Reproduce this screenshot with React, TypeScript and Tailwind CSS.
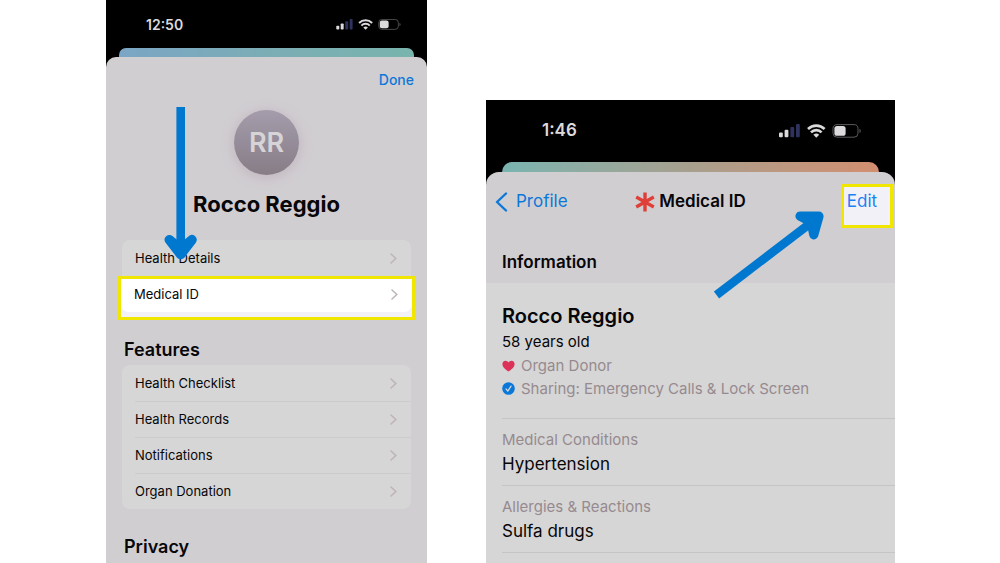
import type { ReactNode } from 'react';

const features = ['Health Checklist', 'Health Records', 'Notifications', 'Organ Donation'];

const records = [
  { label: 'Medical Conditions', value: 'Hypertension' },
  { label: 'Allergies & Reactions', value: 'Sulfa drugs' },
];

/** Signal, wifi and battery */
function StatusIcons({ className }: { className: string }) {
  return (
    <svg viewBox="0 0 82 14" className={className} aria-hidden="true">
      <g fill="#dcdadc">
        <rect x="0" y="8.5" width="3.8" height="4.8" rx="1" />
        <rect x="5.6" y="5.8" width="3.8" height="7.5" rx="1" />
      </g>
      <g fill="#2f325c">
        <rect x="11.4" y="3" width="3.8" height="10.3" rx="1" />
        <rect x="17" y="0" width="3.8" height="13.3" rx="1" />
      </g>
      <g fill="none" stroke="#dcdadc" strokeWidth="2.6">
        <path d="M29 5a11.8 11.8 0 0 1 16.6 0" />
        <path d="M32 8.4a7.4 7.4 0 0 1 10.6 0" />
      </g>
      <path d="M34.4 10.8a4.2 4.2 0 0 1 5.8 0L37.3 13.8z" fill="#dcdadc" />
      <rect x="54" y=".6" width="25" height="12.6" rx="4" fill="none" stroke="#5b595d" />
      <rect x="55.4" y="2" width="11.2" height="9.8" rx="2.6" fill="#dcdadc" />
      <path d="M80.5 4.7v4.4q1.3-.6 1.3-2.2t-1.3-2.2z" fill="#5b595d" />
    </svg>
  );
}

function Chevron() {
  return (
    <svg viewBox="0 0 7 11" className="h-[11px] w-[7px]" aria-hidden="true">
      <path d="M1 1l4.8 4.5L1 10" fill="none" stroke="#bdb3b9" strokeWidth="1.5" strokeLinecap="round" />
    </svg>
  );
}

function Row({ children }: { children: ReactNode }) {
  return (
    <button className="flex h-9 w-full items-center justify-between pt-px pr-[14px] pl-[13px] text-left text-[13px]">
      {children}
      <Chevron />
    </button>
  );
}

/** Profile sheet of the Health app */
function ProfilePhone() {
  return (
    <section className="relative flex flex-col bg-black">
      <div className="flex h-12 items-center justify-between pr-[26px] pl-10 text-[14px] font-semibold text-[#dcdadc]">
        <span>12:50</span>
        <StatusIcons className="h-[11px] w-[65px]" />
      </div>
      <div className="mx-[13px] h-[9px] rounded-t-[7px] bg-linear-to-r from-[#7ba5c5] via-[#7badb5] to-[#79b4ad]" />

      <div className="flex-1 rounded-t-[10px] bg-[#d1ced2] px-4">
        <div className="flex h-11 items-center justify-end">
          <button className="-mr-[3px] text-[14px] font-medium text-[#0b78d9]">Done</button>
        </div>
        <div className="mx-auto mt-[9px] flex size-[65px] items-center justify-center rounded-full bg-linear-to-b from-[#a59cac] to-[#877d87] pt-[2px] text-[27px] font-semibold text-[#d6d4d6] shadow-[0_2px_14px_#bfb3bb]">
          RR
        </div>
        <h1 className="mt-[15px] text-center text-[22px] leading-7 font-bold">Rocco Reggio</h1>

        <div className="mt-[22px] rounded-lg bg-[#d6d6d6]">
          <Row>Health Details</Row>
          <div className="-mx-1 -mb-2 border-3 border-[#f0e600] bg-[#f2f1f7] pb-[5px]">
            <button className="flex h-[33px] w-full items-center justify-between rounded-b-lg bg-white pr-[14px] pb-[2px] pl-[13px] text-left text-[13px]">
              Medical ID
              <Chevron />
            </button>
          </div>
        </div>

        <h2 className="mt-[26px] pl-[2px] text-[18px] leading-6 font-semibold">Features</h2>
        <ul className="mt-[3px] rounded-lg bg-[#d6d6d6]">
          {features.map((name, i) => (
            <li key={name} className="relative">
              <Row>{name}</Row>
              {i > 0 && <span className="absolute top-0 right-0 left-[13px] h-px bg-[#cccbcd]" />}
            </li>
          ))}
        </ul>
        <h2 className="mt-[26px] pl-[2px] text-[18px] leading-6 font-semibold">Privacy</h2>
      </div>

      {/* Arrow pointing down at the Medical ID row */}
      <svg viewBox="0 0 34 154" className="absolute top-[107px] left-[58px] h-[154px] w-[34px]" aria-hidden="true">
        <g fill="#0078cf" stroke="#0078cf" strokeLinejoin="round">
          <path d="M16.7 0v146" strokeWidth="8.6" />
          <path d="M5.4 132.8L16.7 147.5 28 132.8 21 138.5h-8.6z" strokeWidth="9.6" />
        </g>
      </svg>
    </section>
  );
}

/** Medical ID screen */
function MedicalPhone() {
  return (
    <section className="relative mt-[100px] flex flex-col bg-black">
      <div className="flex h-[62px] items-center justify-between pr-[34px] pl-14 text-[17px] font-semibold text-[#dcdadc]">
        <span>1:46</span>
        <StatusIcons className="h-[14px] w-[82px]" />
      </div>
      <div className="mx-4 h-[10px] rounded-t-[10px] bg-linear-to-r from-[#79b4b0] via-[#a79f8e] to-[#d28e70]" />

      <header className="rounded-t-[13px] bg-[#d1ced2]">
        <div className="grid grid-cols-[1fr_auto_1fr] items-start pt-3 pr-[2px] pl-[9px]">
          <button className="flex h-9 items-center gap-2 text-[17px] text-[#0b78d9]">
            <svg viewBox="0 0 13 20" className="h-5 w-[13px]" aria-hidden="true">
              <path d="M11 1.5L2 10l9 8.5" fill="none" stroke="currentColor" strokeWidth="2.4" strokeLinecap="round" strokeLinejoin="round" />
            </svg>
            Profile
          </button>
          <h1 className="mr-[7px] flex h-9 items-center gap-1 text-[17px] font-semibold">
            <svg viewBox="0 0 20 20" className="size-5" aria-hidden="true">
              <path d="M10 .5v19M1.2 5l17.6 10M18.8 5L1.2 15" stroke="#df3f37" strokeWidth="3.4" />
            </svg>
            Medical ID
          </h1>
          <button className="flex h-11 w-[52px] justify-center justify-self-end border-3 border-[#f0e600] bg-[#f2f1f7] pt-[2px] pr-[10px] text-[17px] leading-6 text-[#1a82f5]">
            Edit
          </button>
        </div>
        <h2 className="px-4 pt-[22px] pb-[9px] text-[17px] leading-6 font-semibold">Information</h2>
      </header>

      <div className="flex-1 bg-[#d6d6d6] pl-4">
        <div className="pt-[19px] pb-[18px]">
          <h3 className="text-[20px] leading-7 font-semibold">Rocco Reggio</h3>
          <p className="text-[15px] leading-6">58 years old</p>
          <p className="flex items-center gap-[6px] text-[15px] leading-[23px] text-[#968a8f]">
            <svg viewBox="0 0 13 12" className="h-3 w-[13px]" aria-hidden="true">
              <path d="M6.5 11.5C3.5 9.4.4 6.9.4 3.9.4 2 1.8.7 3.4.7c1.3 0 2.4.7 3.1 1.9C7.2 1.4 8.3.7 9.6.7c1.6 0 3 1.3 3 3.2 0 3-3.1 5.5-6.1 7.6z" fill="#dc3158" />
            </svg>
            Organ Donor
          </p>
          <p className="flex items-center gap-[6px] text-[15px] leading-[23px] text-[#968a8f]">
            <svg viewBox="0 0 13 13" className="size-[13px]" aria-hidden="true">
              <circle cx="6.5" cy="6.5" r="6.3" fill="#0b78d9" />
              <path d="M4 6.9l1.8 2.2L9 4.1" fill="none" stroke="#dcdadc" strokeWidth="1.2" strokeLinecap="round" strokeLinejoin="round" />
            </svg>
            Sharing: Emergency Calls &amp; Lock Screen
          </p>
        </div>
        <dl className="border-b border-[#c5c4c6]">
          {records.map((item) => (
            <div key={item.label} className="border-t border-[#c5c4c6] pt-[9px] pb-2">
              <dt className="text-[15px] leading-6 text-[#968a8f]">{item.label}</dt>
              <dd className="text-[17px] leading-[25px]">{item.value}</dd>
            </div>
          ))}
        </dl>
      </div>

      {/* Arrow pointing at the Edit button */}
      <svg viewBox="0 0 114 90" className="absolute top-[110px] right-[71px] h-[90px] w-[114px]" aria-hidden="true">
        <g fill="#0078cf" stroke="#0078cf" strokeLinejoin="round">
          <path d="M6.5 85L104 10.5" strokeWidth="8.6" />
          <path d="M90 6.2h19l-5.2 18.6-2-9.3-3.6-5z" strokeWidth="9.2" />
        </g>
      </svg>
    </section>
  );
}

export default function App() {
  return (
    <main className="grid min-h-screen grid-cols-[321fr_409fr] gap-[59px] bg-white pr-[105px] pl-[106px] font-['Inter','Liberation_Sans',sans-serif] text-[#070608]">
      <ProfilePhone />
      <MedicalPhone />
    </main>
  );
}
